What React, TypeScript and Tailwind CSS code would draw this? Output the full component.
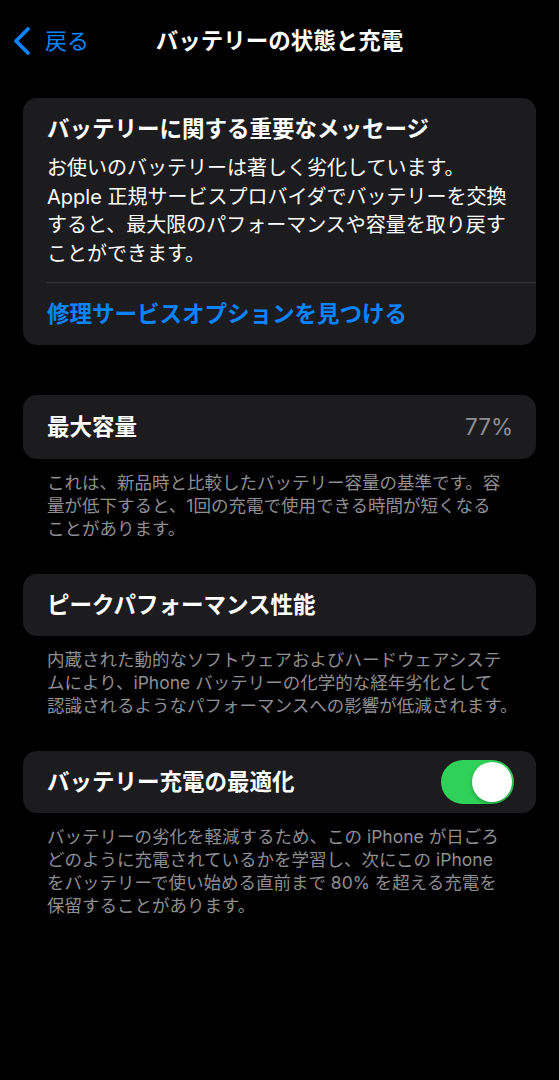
import React from "react";

const Footer = ({ lines }: { lines: string[] }) => (
  <div className="mt-[12px] px-[24px] text-[17.5px] leading-[23px] text-[#8e8e93]">
    {lines.map((l, i) => (
      <div key={i} className="whitespace-nowrap">
        {l}
      </div>
    ))}
  </div>
);

export default function App() {
  return (
    <div className="w-[559px] h-[1080px] bg-black text-white font-['Inter','Noto_Sans_CJK_JP',sans-serif] overflow-hidden">
      {/* Nav */}
      <div className="h-[82px] grid grid-cols-[1fr_auto_1fr] items-center">
        <div className="flex items-center pl-[12px]">
          <svg width="20" height="30" viewBox="0 0 20 30" fill="none">
            <path
              d="M16 3 L4 15 L16 27"
              stroke="#0a84ff"
              strokeWidth="3.8"
              strokeLinecap="round"
              strokeLinejoin="round"
            />
          </svg>
          <span className="ml-[13px] text-[22px] leading-[30px] text-[#0a84ff]">戻る</span>
        </div>
        <div className="text-[22.5px] leading-[30px] font-bold whitespace-nowrap">
          バッテリーの状態と充電
        </div>
        <div />
      </div>

      <div className="px-[23px]">
        {/* Card 1 */}
        <div className="mt-[16px] rounded-[14px] bg-[#1c1c1e] pt-[16px]">
          <div className="px-[24px]">
            <div className="text-[22.5px] leading-[30px] font-bold whitespace-nowrap">
              バッテリーに関する重要なメッセージ
            </div>
            <div className="mt-[10px] pb-[14px] text-[20px] leading-[28.5px]">
              <div className="whitespace-nowrap">お使いのバッテリーは著しく劣化しています。</div>
              <div className="whitespace-nowrap">Apple 正規サービスプロバイダでバッテリーを交換</div>
              <div className="whitespace-nowrap">すると、最大限のパフォーマンスや容量を取り戻す</div>
              <div className="whitespace-nowrap">ことができます。</div>
            </div>
          </div>
          <div className="ml-[24px] h-px bg-[#38383a]" />
          <div className="h-[62px] flex items-center px-[24px] text-[22.5px] font-semibold text-[#0a84ff] whitespace-nowrap">
            修理サービスオプションを見つける
          </div>
        </div>

        {/* Card 2 */}
        <div className="mt-[50px] h-[64px] rounded-[14px] bg-[#1c1c1e] flex items-center justify-between pl-[24px] pr-[23px]">
          <span className="text-[22.5px] font-semibold">最大容量</span>
          <span className="text-[22.5px] text-[#8e8e93]">77%</span>
        </div>
        <Footer
          lines={[
            "これは、新品時と比較したバッテリー容量の基準です。容",
            "量が低下すると、1回の充電で使用できる時間が短くなる",
            "ことがあります。",
          ]}
        />

        {/* Card 3 */}
        <div className="mt-[34px] h-[62px] rounded-[14px] bg-[#1c1c1e] flex items-center px-[24px]">
          <span className="text-[22.5px] font-semibold">ピークパフォーマンス性能</span>
        </div>
        <Footer
          lines={[
            "内蔵された動的なソフトウェアおよびハードウェアシステ",
            "ムにより、iPhone バッテリーの化学的な経年劣化として",
            "認識されるようなパフォーマンスへの影響が低減されます。",
          ]}
        />

        {/* Card 4 */}
        <div className="mt-[34px] h-[62px] rounded-[14px] bg-[#1c1c1e] flex items-center justify-between pl-[24px] pr-[22px]">
          <span className="text-[22.5px] font-semibold">バッテリー充電の最適化</span>
          <div className="w-[73px] h-[44px] rounded-full bg-[#30d158] flex items-center justify-end p-[2px]">
            <div className="w-[40px] h-[40px] rounded-full bg-white shadow-[0_2px_4px_rgba(0,0,0,0.25)]" />
          </div>
        </div>
        <Footer
          lines={[
            "バッテリーの劣化を軽減するため、この iPhone が日ごろ",
            "どのように充電されているかを学習し、次にこの iPhone",
            "をバッテリーで使い始める直前まで 80% を超える充電を",
            "保留することがあります。",
          ]}
        />
      </div>
    </div>
  );
}
